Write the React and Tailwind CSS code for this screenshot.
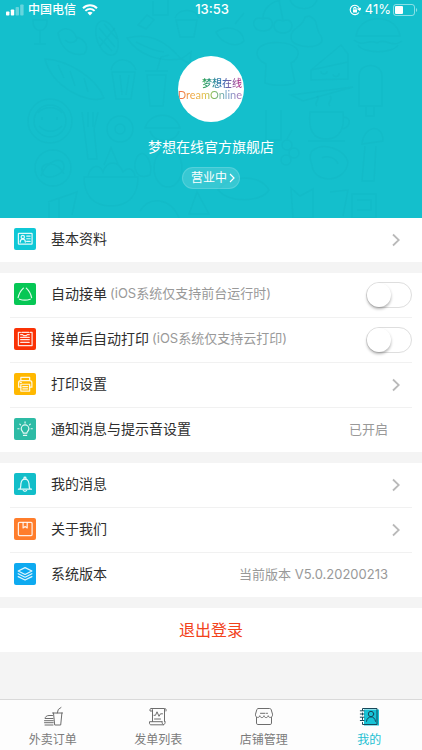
import React, { useState } from 'react';

const icons = {
    card: (
        <>
            <rect x="4.5" y="5.5" width="14" height="11" rx="0.5" />
            <circle cx="9" cy="9.2" r="1.7" />
            <path d="M6.4 14.4c0-4 5.2-4 5.2 0M13 8.3h3.5M13 11h3.5M13 13.7h3.5" />
        </>
    ),
    triangle: <path d="M9.6 5.2C7 7.6 5 11 4.2 15M12.6 5.2c2.6 2.4 4.6 5.8 5.4 9.8M5.6 16.6c3.4 1.1 7.6 1.1 11 0" />,
    receipt: (
        <>
            <path d="M6.5 4.5h-2v13.5h14v-13.5h-2M8 4.5h7" />
            <path d="M6.8 6.8h2l1 1h2.8l1-1h2M6.8 9.6h8.8M6.8 12h8.8M6.8 14.6h8.8" />
        </>
    ),
    printer: (
        <>
            <path d="M7 7V4.5h9V7M7 14.5H4.7V10c0-1.4.8-2.3 2.2-2.3h9.2c1.4 0 2.2.9 2.2 2.3v4.5H16" />
            <path d="M7 11.5h9V18.5H7zM9 14h5M9 16.2h5M6.5 9.7h1" />
        </>
    ),
    bulb: (
        <>
            <path d="M9.5 15.5c0-1.6-2.1-2.2-2.1-4.5a3.9 3.9 0 0 1 7.8 0c0 2.3-2.1 2.9-2.1 4.5zM9.7 17.8h3.2" />
            <path d="M11.3 4v1.2M5.9 6.2l.8.8M16.7 6.2l-.8.8M3.9 11h1.2M17.5 11h1.2" />
        </>
    ),
    bell: (
        <>
            <path d="M4.5 16.6h13.4M6 16.5c1.3-1.6.7-4.2 1.2-6.3C7.7 7.7 9 6.3 11.2 6.3s3.5 1.4 4 3.9c.5 2.1-.1 4.7 1.2 6.3" />
            <path d="M10.2 6.2v-1.2c0-1 2-1 2 0v1.2M9.5 18c1 .8 2.4.8 3.4 0" />
        </>
    ),
    book: (
        <>
            <rect x="4.5" y="4.5" width="14" height="13.5" rx="1" />
            <path d="M9.3 4.7v5.5l2.1-1.5 2.1 1.5V4.7" />
        </>
    ),
    layers: (
        <>
            <path d="M11.3 4.7l7 3.5-7 3.5-7-3.5z" />
            <path d="M4.3 11l7 3.5 7-3.5M4.3 13.9l7 3.5 7-3.5" />
        </>
    ),
};

const profileRows = [
    { icon: 'card', color: 'bg-[#0fc8d6]', label: '基本资料', type: 'link' },
];

const orderRows = [
    { icon: 'triangle', color: 'bg-[#06c755]', label: '自动接单', hint: '(iOS系统仅支持前台运行时)', type: 'switch' },
    { icon: 'receipt', color: 'bg-[#fa3205]', label: '接单后自动打印', hint: '(iOS系统仅支持云打印)', type: 'switch' },
    { icon: 'printer', color: 'bg-[#ffb800]', label: '打印设置', type: 'link' },
    { icon: 'bulb', color: 'bg-[#2dbba5]', label: '通知消息与提示音设置', type: 'text', value: '已开启' },
];

const aboutRows = [
    { icon: 'bell', color: 'bg-[#12bec9]', label: '我的消息', type: 'link' },
    { icon: 'book', color: 'bg-[#ff7d2b]', label: '关于我们', type: 'link' },
    { icon: 'layers', color: 'bg-[#0eaaf0]', label: '系统版本', type: 'text', value: '当前版本 V5.0.20200213' },
];

function Chevron() {
    return (
        <svg width="8" height="14" viewBox="0 0 8 14" fill="none" stroke="#b9b9b9" strokeWidth="1.8" className="mr-3">
            <path d="M1 1.5L6.8 7L1 12.5" />
        </svg>
    );
}

function RowLabel({ row }) {
    return (
        <span className="flex items-center pb-0.5">
            <span className={`mr-[15px] h-[22px] w-[22px] rounded-[2px] ${row.color}`}>
                <svg width="22" height="22" viewBox="0 0 22.5 22.5" fill="none" stroke="white" strokeWidth="1.25" strokeLinecap="round" strokeLinejoin="round" strokeOpacity="0.88">{icons[row.icon]}</svg>
            </span>
            <span className="text-sm text-[#2e2e2e]">{row.label}</span>
            {row.hint && <span className="ml-[3px] text-[13px] text-[#999]">{row.hint}</span>}
        </span>
    );
}

function Row({ row }) {
    const [on, setOn] = useState(false);
    const base = 'flex h-11 w-full items-center justify-between pl-1';

    if (row.type === 'link') return <a href="#" className={base}><RowLabel row={row} /><Chevron /></a>;
    if (row.type === 'switch') return (
        <label className={base}>
            <RowLabel row={row} />
            <input type="checkbox" role="switch" checked={on} onChange={e => setOn(e.target.checked)}
                className="h-[26px] w-[46px] appearance-none rounded-full border border-[#dedede] bg-white before:block before:h-6 before:w-6 before:rounded-full before:bg-white before:shadow-[0_2px_3px_rgba(0,0,0,0.3)] checked:bg-[#14bfcc] checked:before:translate-x-5" />
        </label>
    );
    return (
        <div className={base}>
            <RowLabel row={row} />
            <span className="mr-6 text-[13px] text-[#999]">{row.value}</span>
        </div>
    );
}

function Group({ rows }) {
    return (
        <section className="divide-y divide-[#f1f1f1] bg-white px-2.5">
            {rows.map(row => <div key={row.label}><Row row={row} /></div>)}
        </section>
    );
}

function StatusBar() {
    return (
        <div className="grid h-5 grid-cols-3 items-center pr-1 pl-1.5 text-white">
            <div className="flex items-center">
                <svg width="18" height="12" viewBox="0 0 18 12" fill="white">
                    <rect x="0" y="7.5" width="3.4" height="4" rx="0.8" />
                    <rect x="4.8" y="5.5" width="3.4" height="6" rx="0.8" />
                    <rect x="9.6" y="3" width="3.4" height="8.5" rx="0.8" opacity="0.35" />
                    <rect x="14.2" y="0.5" width="3.4" height="11" rx="0.8" opacity="0.35" />
                </svg>
                <span className="ml-1 text-xs font-medium">中国电信</span>
                <svg width="16" height="12" viewBox="0 0 16 12" fill="none" stroke="white" strokeWidth="2" className="ml-1.5">
                    <path d="M1 4.2c4-3.9 10-3.9 14 0M3.4 6.9c2.7-2.6 6.5-2.6 9.2 0" />
                    <path d="M5.4 8.8c1.5-1.3 3.7-1.3 5.2 0L8 11.6z" fill="white" stroke="none" />
                </svg>
            </div>
            <span className="text-center text-[13px] font-medium">13:53</span>
            <div className="flex items-center justify-end">
                <svg width="12" height="12" viewBox="0 0 12 12" fill="none" stroke="white" strokeWidth="1.1">
                    <path d="M10.5 4.8a4.7 4.7 0 1 0-.6 3.7M11.7 4.5l-1 1.8-1.7-1.2z" />
                    <rect x="4" y="5.5" width="4" height="3" fill="white" stroke="none" />
                    <path d="M4.8 5.5V4.3c0-1.3 2.2-1.3 2.2 0v1.2" />
                </svg>
                <span className="ml-1 text-[13px]">41%</span>
                <svg width="25" height="12" viewBox="0 0 25 12" fill="none" className="ml-0.5">
                    <rect x="0.5" y="0.5" width="21" height="11" rx="2.5" stroke="white" strokeOpacity="0.5" />
                    <rect x="2" y="2" width="8" height="8" rx="1" fill="white" />
                    <path d="M23 4c1.6.5 1.6 3.500 0 4z" fill="white" fillOpacity="0.5" />
                </svg>
            </div>
        </div>
    );
}

// faint food line drawings behind the shop name
function Doodles() {
    return (
        <svg viewBox="0 0 422 218" preserveAspectRatio="xMidYMid slice" fill="none" stroke="#08889a" strokeOpacity="0.07" strokeWidth="1.5" className="absolute inset-0 h-full w-full">
            <path d="M33 20c-1 14 15 14 14 0zM40 31v12M34 44h12" />
            <path d="M58 33c7-8 16-3 18 4 9 2 14 10 8 17-12 2-23-4-26-21zM65 40c4 4 11 3 12-2" />
            <ellipse cx="107" cy="38" rx="10" ry="18" transform="rotate(-20 107 38)" />
            <path d="M99 28l16 19M99 37l13 14M104 24l13 15M115 28l-15 18" />
            <path d="M127 38c20-5 36 0 54 21-21 3-42-3-54-21zM136 42c8 4 17 9 28 10M181 59l10-7-1 12z" />
            <path d="M45 59c22 1 51 18 59 39-16 7-52-11-59-39zM58 65l6 13M70 71l5 15M84 78l4 14" />
            <path d="M112 72h23l-4 27h-15zM111 70c3-14 21-13 25 0M120 75l2 20M129 75l-3 20M147 75h19l-3 31h-13zM145 71h23M157 70l4-13 8-2" />
            <path d="M138 25l9-10 7 5-8 9zM153 1v14h15V0M176 20l4 17h14l3-17zM175 18c3-10 21-10 24 0" />
            <circle cx="50" cy="121" r="22" /><circle cx="50" cy="121" r="16" />
            <path d="M38 113c5-7 19-7 24 0M42 117v3M57 117v3M39 126c7 7 16 7 23 0" />
            <circle cx="53" cy="168" r="18" />
            <path d="M41 176c5-15 22-21 23-10 1 9-20 17-22 5-2-10 17-10 22 3M48 202l29-10-5 23M49 203v15M59 198v20" />
            <path d="M82 112l6 47h9l-3-30 4-17M88 112v15M93 112v15" />
            <circle cx="120" cy="129" r="13" /><circle cx="120" cy="129" r="5" />
            <path d="M145 128c5-17 30-17 35 0zM150 131c4 13 25 13 29 0M137 157c8-11 16 7 13 18-14 6-18-8-13-18z" />
            <path d="M84 177h54c0 18-9 29-27 29s-27-11-27-29zM88 176c3-12 12-12 15-4 4-12 15-12 20 0 7-7 11-1 12 4M104 165l7-17 7 16" />
            <ellipse cx="168" cy="168" rx="14" ry="19" /><path d="M140 211c10-16 31-13 39 7M197 192l-8 22h20z" />
            <path d="M216 32c10-7 26-5 28 9-8 8-23 2-28-9zM235 24l9-11M263 31c-13 0-12-17 0-12 11-5 14 12 0 12zM283 33c-13 0-11-17 0-12 11-5 13 12 0 12zM263 18c0-9 8-16 17-18M283 20l-4-20" />
            <path d="M309 16c11 4 5 12 12 20 8 14-31 14-30 1 0-10 12-9 14-20zM260 47c9-7 30-5 36 1 6 7-2 14-5 15l4 20c-8 3-22 3-30 0l1-19c-10-5-11-12-6-17z" />
            <path d="M311 70l30-25 7 9v25l-37 1zM311 70l37-8M321 71a3 3 0 1 0 6 0M333 74a3 3 0 1 0 6-1M291 95l62-8-50 14z" />
            <path d="M356 36c3-23 41-23 44 0zM354 40c10 8 14-2 23 3 9-6 14 6 25-2M358 45c5 9 35 9 40 0M359 106V76c0-14 23-14 23 0v30zM366 106v10h8v-10" />
            <path d="M310 112h33c2 18-4 27-17 27s-18-9-16-27zM343 117c10 0 7 12-2 12M308 141h37M317 106c-4-4 4-6 0-10M330 106c-4-4 4-6 0-10" />
            <path d="M312 151c12-10 33-1 36 11-2 21-34 23-36 3-2-5-3-10 0-14zM322 158c6-3 14 0 16 6M362 144c2-19 21-21 21-3zM365 146l-3 35h12l2-35" />
            <path d="M266 110v30h15v-30M282 145a5 5 0 1 0 10 0 5 5 0 1 0-10 0M289 153a5 5 0 1 0 10 0 5 5 0 1 0-10 0M281 160a5 5 0 1 0 10 0 5 5 0 1 0-10 0M287 139l5-9" />
            <path d="M218 190c10-15 42-17 51 0-8 13-40 13-51 0zM291 188l9 8 13-7v29h-20zM330 192l18-2-5 26M352 194h24v24h-24zM357 200h14v10h-14M377 0v14h-14M290 0c4 11 23 12 27 0" />
        </svg>
    );
}

function Header() {
    return (
        <header className="relative bg-[#14bfcc] pb-[29px]">
            <Doodles />
            <div className="relative flex flex-col">
                <StatusBar />
                <div className="mt-9 flex h-[66px] w-[66px] flex-col items-end justify-center self-center overflow-hidden rounded-full bg-white pr-0.5">
                    <span className="bg-linear-to-r from-[#35a84a] via-[#2d6db5] to-[#c0308f] bg-clip-text text-[10px] leading-[12px] font-medium text-transparent">梦想在线</span>
                    <span className="bg-[linear-gradient(90deg,#ee6a50,#f0a03c_20%,#e3bf45_42%,#7dba5a_55%,#6aa3c8_75%,#b06fb8)] bg-clip-text font-[Lato] text-[11px] leading-[12px] text-transparent">DreamOnline</span>
                </div>
                <h1 className="mt-[15px] text-center text-sm leading-5 text-white">梦想在线官方旗舰店</h1>
                <button className="mt-2.5 flex h-[22px] items-center gap-0.5 self-center rounded-full border border-white/15 bg-white/15 pr-1 pl-2 text-xs text-white">
                    营业中
                    <svg width="6" height="10" viewBox="0 0 6 10" fill="none" stroke="white" strokeWidth="1.2"><path d="M1 1l4 4-4 4" /></svg>
                </button>
            </div>
        </header>
    );
}

const tabs = [
    {
        label: '外卖订单',
        icon: (
            <>
                <path d="M11.5 7h10M12.5 7l1.2 12h6l1.2-12M16.3 7l1-3.5 2.7-2" />
                <path d="M11.5 9.5H8C5.5 9.5 4.2 11 4 12.5h8M3.5 14.7h8.8M3.5 16.7h8.8M4 19h8" />
            </>
        ),
    },
    {
        label: '发单列表',
        icon: (
            <>
                <path d="M6.5 15.5V4c0-2-2.5-2-2.5 0v1h2.5M5 2.5h13.5v13M18.5 5V3c1.5-.8 2 .5 1.5 2M16 15.7H3.5v1.5c0 1 .7 1.6 1.5 1.6h12.5" />
                <path d="M16 15.7c0 4 3.2 4 3.2 0M8 9.3h1.5l1.5-3.5 2 4.5 1.5-2.5h2M8.5 13h6" />
            </>
        ),
    },
    {
        label: '店铺管理',
        icon: (
            <>
                <path d="M6.5 2.5h11c1 0 1.5.5 1.7 1.2l1.3 4.5c.5 4-4 4-4.3 1.5-.5 2.5-3.7 2.5-4.2 0-.5 2.5-3.7 2.5-4.2 0-.3 2.5-4.8 2.5-4.3-1.5l1.3-4.5c.2-.7.7-1.2 1.7-1.2z" />
                <path d="M4.5 11.5v5.7c0 .8.5 1.3 1.3 1.3h12.4c.8 0 1.3-.5 1.3-1.3v-5.7M8.5 7.3H13M14.5 7.3h1" />
            </>
        ),
    },
    {
        label: '我的', active: true,
        icon: (
            <>
                <path d="M7 3.5h15v16H7z" fill="#17c3d6" stroke="none" />
                <path d="M5.5 4.5v-2H20V18.5H5.5v-2M5.5 7v2M5.5 11.5v2M3.3 4.8h3.7M3.3 8h3.7M3.3 11.2h3.7M3.3 14.5h3.7" />
                <circle cx="14" cy="8" r="2.7" /><path d="M9.5 15.3c.5-6 8.5-6 9 0" />
            </>
        ),
    },
];

function TabBar() {
    return (
        <nav className="mt-auto grid grid-cols-4 border-t border-[#d9d9d9] bg-[#fdfdfd] pt-1.5 pb-0.5">
            {tabs.map(tab => (
                <a key={tab.label} href="#" className={`flex flex-col items-center gap-1.5 text-xs ${tab.active ? 'text-[#22c0d2]' : 'text-[#7b7b7b]'}`}>
                    <svg width="24" height="20" viewBox="0 0 24 20" fill="none" stroke={tab.active ? '#17485a' : '#6d6d6d'} strokeLinecap="round" strokeLinejoin="round">{tab.icon}</svg>
                    {tab.label}
                </a>
            ))}
        </nav>
    );
}

export default function App() {
    return (
        <div className="flex min-h-screen flex-col bg-[#f4f4f4] font-['Inter','Noto_Sans_CJK_SC',sans-serif]">
            <Header />
            <main className="mb-4 flex flex-col gap-[11px]">
                <Group rows={profileRows} />
                <Group rows={orderRows} />
                <Group rows={aboutRows} />
                <button className="h-11 bg-white text-base text-[#f2421b]">退出登录</button>
            </main>
            <TabBar />
        </div>
    );
}
